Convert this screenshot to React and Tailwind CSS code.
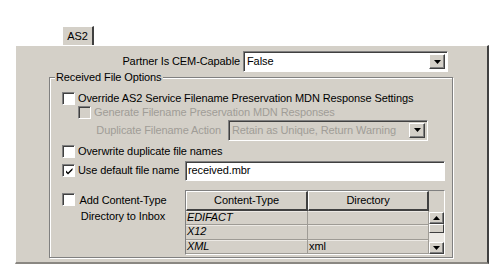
import React from "react";

const FONT = { fontFamily: '"Liberation Sans", Arial, sans-serif', letterSpacing: "-0.1px" };

function Check({ checked = false, disabled = false }) {
  return (
    <div
      className={`w-[13px] h-[13px] shrink-0 border-t border-l border-t-[#808080] border-l-[#808080] border-b border-r border-b-white border-r-white shadow-[inset_1px_1px_0_#404040] flex items-center justify-center ${
        disabled ? "bg-[#d4d0c8]" : "bg-white"
      }`}
    >
      {checked && (
        <svg width="9" height="9" viewBox="0 0 9 9" className="ml-[1px] mt-[1px]">
          <path d="M1 3.5 L3 5.5 L7.5 1 L7.5 3 L3 7.5 L1 5.5 Z" fill="#000" />
        </svg>
      )}
    </div>
  );
}

function ArrowBtn({ dir = "down", w = "w-[16px]", h = "h-full" }) {
  return (
    <div
      className={`${w} ${h} shrink-0 bg-[#d4d0c8] border-t border-l border-t-white border-l-white border-b border-r border-b-[#404040] border-r-[#404040] shadow-[inset_-1px_-1px_0_#808080] flex items-center justify-center`}
    >
      <svg width="7" height="4" viewBox="0 0 7 4">
        {dir === "down" ? (
          <path d="M0 0 L7 0 L3.5 4 Z" fill="#000" />
        ) : (
          <path d="M0 4 L7 4 L3.5 0 Z" fill="#000" />
        )}
      </svg>
    </div>
  );
}

function Select({ value, width, height, disabled = false }) {
  return (
    <div
      className={`${width} ${height} flex border border-t-[#808080] border-l-[#808080] border-b-white border-r-white shadow-[inset_1px_1px_0_#404040] p-[2px] ${
        disabled ? "bg-[#d4d0c8]" : "bg-white"
      }`}
    >
      <div
        className={`flex-1 min-w-0 overflow-hidden whitespace-nowrap flex items-center pl-[1px] ${
          disabled ? "text-[#a09d97]" : "text-black"
        }`}
      >
        {value}
      </div>
      <ArrowBtn />
    </div>
  );
}

export default function App() {
  return (
    <div
      className="w-[504px] h-[273px] bg-white pt-[26px] pl-[15px] text-[11px] leading-[13px] text-black whitespace-nowrap"
      style={FONT}
    >
      {/* tab */}
      <div className="ml-[47px] w-[32px] h-[19px] bg-[#d4d0c8] border-t border-l border-t-white border-l-white border-r-2 border-r-[#404040] flex items-center justify-center pt-[1px]">
        AS2
      </div>
      {/* panel */}
      <div className="w-[474px] h-[219px] bg-[#d4d0c8] border-t border-l border-t-white border-l-white border-r-2 border-r-[#404040] border-b-2 border-b-[#8a8782] flex flex-col">
        {/* partner row */}
        <div className="flex items-center mt-[5px] h-[21px]">
          <div className="w-[224px] text-right">Partner Is CEM-Capable</div>
          <div className="ml-[3px]">
            <Select value="False" width="w-[205px]" height="h-[21px]" />
          </div>
        </div>

        {/* fieldset */}
        <div className="relative ml-[33px] mt-[5px] w-[404px] h-[181px] border border-[#808080] shadow-[inset_1px_1px_0_#fff,1px_1px_0_#fff] flex flex-col pt-[13px]">
          <span className="absolute -top-[7px] left-[5px] px-[1px] bg-[#d4d0c8]">
            Received File Options
          </span>

          {/* override */}
          <div className="flex items-center h-[15px] pl-[12px] gap-[3px]">
            <Check />
            <span>Override AS2 Service Filename Preservation MDN Response Settings</span>
          </div>

          {/* generate */}
          <div className="flex items-center h-[13px] pl-[28px] gap-[3px] text-[#a09d97]">
            <Check disabled />
            <span>Generate Filename Preservation MDN Responses</span>
          </div>

          {/* duplicate */}
          <div className="flex items-center h-[22px]">
            <div className="w-[171px] text-right text-[#a09d97]">Duplicate Filename Action</div>
            <div className="ml-[7px]">
              <Select
                value="Retain as Unique, Return Warning"
                width="w-[200px]"
                height="h-[21px]"
                disabled
              />
            </div>
          </div>

          {/* overwrite */}
          <div className="flex items-center h-[14px] mt-[3px] pl-[12px] gap-[3px]">
            <Check />
            <span>Overwrite duplicate file names</span>
          </div>

          {/* use default */}
          <div className="flex items-center h-[21px] mt-[2px]">
            <div className="w-[135px] pl-[12px] flex items-center gap-[3px]">
              <Check checked />
              <span>Use default file name</span>
            </div>
            <div className="w-[260px] h-[20px] bg-white border border-t-[#808080] border-l-[#808080] border-b-white border-r-white shadow-[inset_1px_1px_0_#404040] flex items-center pl-[2px]">
              received.mbr
            </div>
          </div>

          {/* content-type */}
          <div className="flex mt-[9px] h-[65px]">
            <div className="w-[135px] pl-[12px] flex items-start gap-[2px] pt-[3px]">
              <Check />
              <span className="text-center leading-[16px] -mt-[1px] w-[92px]">
                Add Content-Type
                <br />
                Directory to Inbox
              </span>
            </div>
            <div className="w-[260px] h-[65px] border border-t-[#808080] border-l-[#808080] border-b-white border-r-white flex">
              <div className="flex-1 flex flex-col">
                <div className="flex h-[20px]">
                  <div className="w-[122px] bg-[#d4d0c8] border-t border-l border-t-white border-l-white border-b-2 border-r-2 border-b-[#404040] border-r-[#404040] flex items-center justify-center">
                    Content-Type
                  </div>
                  <div className="w-[121px] bg-[#d4d0c8] border-t border-l border-t-white border-l-white border-b-2 border-r-2 border-b-[#404040] border-r-[#404040] flex items-center justify-center">
                    Directory
                  </div>
                </div>
                {[
                  ["EDIFACT", ""],
                  ["X12", ""],
                  ["XML", "xml"],
                ].map(([a, b]) => (
                  <div key={a} className="flex h-[14.5px]">
                    <div className="w-[122px] border-b border-r border-[#9e9b95] shadow-[inset_0_1px_0_#ece9e4] italic pl-[1px] flex items-center">
                      {a}
                    </div>
                    <div className="w-[121px] border-b border-r border-[#9e9b95] shadow-[inset_0_1px_0_#ece9e4] pl-[1px] flex items-center">
                      {b}
                    </div>
                  </div>
                ))}
              </div>
              {/* scrollbar column */}
              <div className="w-[15px] flex flex-col">
                <div className="h-[21px] bg-[#d4d0c8]" />
                <ArrowBtn dir="up" w="w-[15px]" h="h-[12px]" />
                <div className="h-[9px] w-[15px] bg-[#d4d0c8] border-t border-l border-t-white border-l-white border-b border-r border-b-[#404040] border-r-[#404040]" />
                <div className="flex-1 bg-[#ece9e4]" />
                <ArrowBtn dir="down" w="w-[15px]" h="h-[12px]" />
              </div>
            </div>
          </div>
        </div>
      </div>
    </div>
  );
}
